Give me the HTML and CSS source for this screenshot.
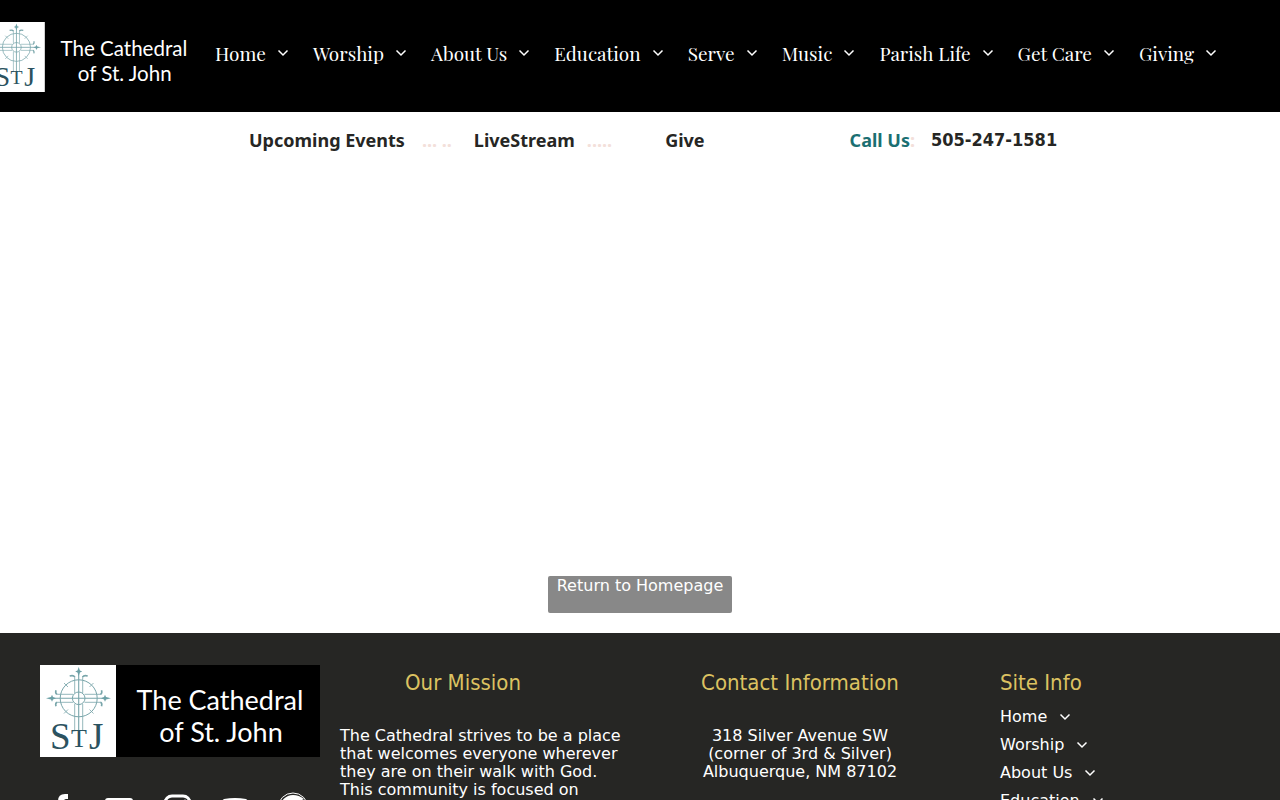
FILE: index.html
```html
<!DOCTYPE html>
<html lang="en">
<head>
<meta charset="utf-8">
<meta name="viewport" content="width=device-width, initial-scale=1">
<title>The Cathedral of St. John</title>
<link rel="stylesheet" href="styles.css">
</head>
<body>
<svg class="defs" aria-hidden="true">
  <symbol id="chevron" viewBox="0 0 12 8"><path d="M1.500 1.500 6 6l4.500-4.500" fill="none" stroke="currentColor" stroke-width="1.500"/></symbol>
  <symbol id="logo" viewBox="0 0 280 92">
    <path d="M0 0h280v92H0z" fill="#000"/>
    <path d="M0 0h76v92H0z" fill="#fff"/>
    <g fill="none" stroke="#78a5aa">
      <circle cx="38.700" cy="33.300" r="18.500" stroke-width="1"/>
      <circle cx="38.700" cy="33.300" r="6.300" stroke-width="1"/>
      <path d="M38.700 5v60M10 33.300h57" stroke-width="1.100"/>
      <path d="M34.700 11v17M42.700 11v17M34.700 39v26M42.700 39v26M17 29.300h16M44.500 29.300H61M17 37.300h16M44.500 37.300H61M24 18l4 4M53.500 18l-4 4M24 48.500l4-4M53.500 48.500l-4-4" stroke-width=".8"/>
      <path d="M34.700 12q-1-2-5-1M42.700 12q1-2 5-1M17 29.300q-2-1-1-4M17 37.300q-2 1-1 4M60.500 29.300q2-1 1-4M60.500 37.300q2 1 1 4" stroke-width="1.600"/>
    </g>
    <path d="M38.700 2l1.200 3.500 2.300 1-2.300 1-1.200 3.500-1.200-3.500-2.300-1 2.300-1zM6 33.300l5-1.200 1-2.300 1 2.300 3 1.200-3 1.200-1 2.300-1-2.300zM71 33.300l-5-1.200-1-2.300-1 2.300-3 1.200 3 1.200 1 2.300 1-2.300z" fill="#6ca0a6"/>
    <g class="monogram"><text x="10" y="84" font-size="37">S</text><text x="31" y="82" font-size="26">T</text><text x="49" y="84" font-size="37">J</text></g>
    <g class="logo-words"><text x="180" y="45" font-size="27">The Cathedral</text><text x="181" y="77" font-size="27">of St. John</text></g>
  </symbol>
</svg>

<header class="site-header">
  <a class="brand" href="#" aria-label="The Cathedral of St. John"><svg class="brand-logo"><use href="#logo"/></svg></a>
  <nav class="main-nav" aria-label="Main">
    <a href="#">Home<svg class="chev"><use href="#chevron"/></svg></a>
    <a href="#">Worship<svg class="chev"><use href="#chevron"/></svg></a>
    <a href="#">About Us<svg class="chev"><use href="#chevron"/></svg></a>
    <a href="#">Education<svg class="chev"><use href="#chevron"/></svg></a>
    <a href="#">Serve<svg class="chev"><use href="#chevron"/></svg></a>
    <a href="#">Music<svg class="chev"><use href="#chevron"/></svg></a>
    <a href="#">Parish Life<svg class="chev"><use href="#chevron"/></svg></a>
    <a href="#">Get Care<svg class="chev"><use href="#chevron"/></svg></a>
    <a href="#">Giving<svg class="chev"><use href="#chevron"/></svg></a>
  </nav>
</header>

<main class="page">
  <div class="quick-links">
    <a href="#">Upcoming Events</a><span class="faint dots-a">... ..</span>
    <a href="#">LiveStream</a><span class="faint dots-b">.....</span>
    <a class="give" href="#">Give</a>
    <span class="call">Call Us<span class="faint">:</span></span>
    <a class="phone" href="tel:5052471581">505-247-1581</a>
  </div>
  <a class="home-button" href="#">Return to Homepage</a>
</main>

<footer class="site-footer">
  <div>
    <svg class="footer-logo" viewBox="0 0 280 92" role="img" aria-label="The Cathedral of St. John"><use href="#logo"/></svg>
    <div class="social">
      <a href="#" aria-label="Facebook"><svg viewBox="0 0 32 32"><path d="M23 2h-3q-7 0-7 7v4H9v5h4v12h6V18h4v-5h-4V9q0-2 2-2h2z"/></svg></a>
      <a href="#" aria-label="Email"><svg viewBox="0 0 32 32"><path d="M5 6h22q3 0 3 3L16 18 2 9q0-3 3-3zM2 12l14 10 14-10v15H2z"/></svg></a>
      <a href="#" aria-label="Instagram"><svg viewBox="0 0 32 32"><g fill="none" stroke="currentColor" stroke-width="3"><rect x="4" y="4" width="25" height="25" rx="7"/><circle cx="16.500" cy="16.500" r="6"/></g><circle cx="24" cy="9" r="1.500"/></svg></a>
      <a href="#" aria-label="YouTube"><svg viewBox="0 0 32 32"><path fill-rule="evenodd" d="M5 7q11-2 22 0 3 1 3 10t-3 10q-11 2-22 0-3-1-3-10T5 7zm8 5v10l9-5z"/></svg></a>
      <a href="#" aria-label="Website"><svg viewBox="0 0 32 32"><circle cx="16" cy="16" r="15" fill="none" stroke="currentColor"/><path d="M16 3a13 13 0 1 0 13 13q-5-1-4-8l2-1q-5-4-11-4z"/></svg></a>
    </div>
  </div>
  <section class="mission">
    <h2>Our Mission</h2>
    <p>The Cathedral strives to be a place<br>that welcomes everyone wherever<br>they are on their walk with God.<br>This community is focused on</p>
  </section>
  <section class="contact">
    <h2>Contact Information</h2>
    <p>318 Silver Avenue SW<br>(corner of 3rd &amp; Silver)<br>Albuquerque, NM 87102</p>
  </section>
  <section class="site-info">
    <h2>Site Info</h2>
    <nav class="footer-nav" aria-label="Footer">
      <a href="#">Home<svg class="chev"><use href="#chevron"/></svg></a>
      <a href="#">Worship<svg class="chev"><use href="#chevron"/></svg></a>
      <a href="#">About Us<svg class="chev"><use href="#chevron"/></svg></a>
      <a href="#">Education<svg class="chev"><use href="#chevron"/></svg></a>
    </nav>
  </section>
</footer>
</body>
</html>
```
FILE: styles.css
```css
* { box-sizing: border-box; }
body {
  margin: 0;
  min-height: 100vh;
  font: 16px/18px Tahoma, Verdana, "DejaVu Sans", sans-serif;
  color: #262624;
  background: #fff;
}
a { color: inherit; text-decoration: none; }
.defs { display: none; }
.monogram { font-family: "Liberation Serif", serif; fill: #2b5260; }
.logo-words { font-family: Papyrus, Lato, sans-serif; fill: #fff; text-anchor: middle; }

.site-header {
  display: flex;
  align-items: center;
  padding: 22px 0 20px;
  background: #000;
  color: #fff;
  overflow: hidden;
}
.brand { flex: none; margin-left: -13px; }
.brand-logo { display: block; width: 213px; height: 70px; }
.main-nav {
  display: flex;
  gap: 24px;
  margin-left: 15px;
  padding-bottom: 8px;
  font: 19px/24px "Playfair Display", "Liberation Serif", serif;
}
.main-nav a { display: flex; align-items: center; gap: 11px; white-space: nowrap; }
.chev { width: 12px; height: 8px; }

.page {
  display: flex;
  flex-direction: column;
  justify-content: space-between;
  align-items: center;
  min-height: 521px;
  padding: 15px 0 20px;
}
.quick-links {
  display: flex;
  align-self: stretch;
  padding-left: 249px;
  font-family: Tahoma, Verdana, "Noto Sans", sans-serif;
  font-size: 18px;
  line-height: 26px;
  font-weight: 700;
  white-space: nowrap;
}
.faint { color: #f3e0da; }
.dots-a { margin: 0 22px 0 17px; }
.dots-b { margin-left: 12px; }
.give { margin-left: 53px; }
.call { margin: 0 16px 0 145px; color: #1b6f72; }
.phone { font-family: Tahoma, Verdana, "DejaVu Sans Condensed", sans-serif; }
.home-button {
  min-width: 184px;
  height: 37px;
  border-radius: 2px;
  background: #888;
  color: #fff;
  line-height: 20px;
  text-align: center;
}

.site-footer {
  display: grid;
  grid-template-columns: 280fr 300fr 280fr 280fr;
  gap: 20px;
  padding: 32px 40px 24px;
  background: #262624;
  color: #fff;
}
.footer-logo { display: block; width: 100%; }
.social { display: flex; gap: 26px; margin-top: 35px; padding-left: 5px; }
.social svg { display: block; width: 32px; height: 32px; fill: currentColor; }
h2 {
  margin: 0;
  padding-top: 4px;
  font-family: Tahoma, Verdana, "DejaVu Sans Condensed", sans-serif;
  font-size: 22px;
  line-height: 28px;
  font-weight: 400;
  color: #dcc261;
}
p { margin: 30px 0 0; white-space: nowrap; }
.mission h2 { margin-right: 54px; text-align: center; }
.contact { text-align: center; }
.site-info { padding-left: 40px; }
.footer-nav { display: grid; gap: 10px; margin-top: 11px; }
.footer-nav a { display: flex; align-items: center; gap: 12px; }
```
